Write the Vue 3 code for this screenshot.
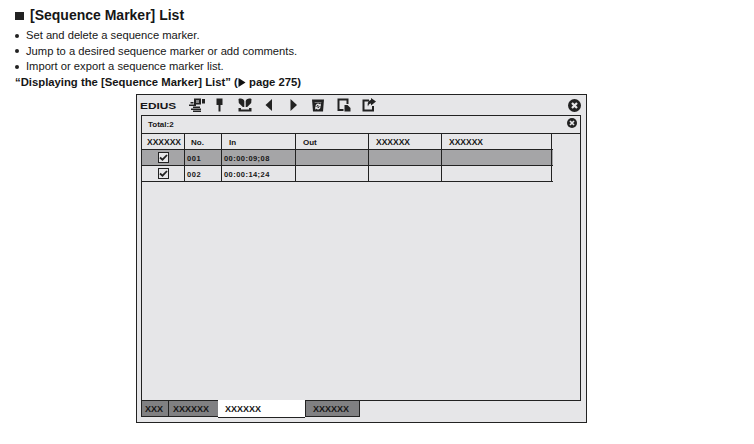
<script setup>
const items = ['Set and delete a sequence marker.', 'Jump to a desired sequence marker or add comments.', 'Import or export a sequence marker list.']
const cols = [
  { label: 'XXXXXX', cls: 'c0' },
  { label: 'No.', cls: 'c1' },
  { label: 'In', cls: 'c2' },
  { label: 'Out', cls: 'c3' },
  { label: 'XXXXXX', cls: 'c4' },
  { label: 'XXXXXX', cls: 'c5' }
]
const rows = [
  { no: '001', tc: '00:00:09;08', sel: true },
  { no: '002', tc: '00:00:14;24', sel: false }
]
</script>

<template>
  <div class="page">
    <header class="intro">
      <h1 class="title"><span class="square"></span>[Sequence Marker] List</h1>
      <ul class="bullets">
        <li v-for="t in items" :key="t"><span class="dot"></span>{{ t }}</li>
      </ul>
      <p class="ref">“Displaying the [Sequence Marker] List” (<svg class="arrow" width="8" height="9" viewBox="0 0 8 9"><path d="M0.5 0 L7.5 4.5 L0.5 9 Z" fill="#111"/></svg> page 275)</p>
    </header>

    <section class="window">
      <div class="toolbar">
        <span class="logo">EDIUS</span>
        <svg class="tool t1" width="16" height="15" viewBox="0 0 16 15">
          <path d="M5 0.500h7v6H5z M13 1h3v4.500h-3z M1.500 4h3v1.500h-3z M0 6.500h7V8H0z M4 8.500h7V10H4z M2 10.500h10V12H2z M4 12.500h8V14H4z" fill="#222"/>
          <path d="M7 2h3v3H7z" fill="#8a8a8a"/>
        </svg>
        <svg class="tool t2" width="7" height="14" viewBox="0 0 7 14">
          <path d="M0.500 0.500h6v6.500h-2v6.500h-2V7h-2z" fill="#222"/>
        </svg>
        <svg class="tool t3" width="14" height="14" viewBox="0 0 14 14">
          <path d="M0.500 1C3 0 6 1 6.300 3L6.300 9H4.800L0.800 5z M13.500 1C11 0 8 1 7.700 3L7.700 9h1.500l4-4z" fill="#222"/>
          <path d="M0.500 10h2.500v1.500h8V10h2.500v3.500H0.500z" fill="#222"/>
        </svg>
        <svg class="tool t4" width="8" height="12" viewBox="0 0 8 12">
          <path d="M7 0v12L0.500 6z" fill="#222"/>
        </svg>
        <svg class="tool t5" width="8" height="12" viewBox="0 0 8 12">
          <path d="M0.500 0v12l6.500-6z" fill="#222"/>
        </svg>
        <svg class="tool t6" width="12" height="13" viewBox="0 0 12 13">
          <path d="M0 0.500h12l-1 12H1z" fill="#222"/>
          <path d="M2.500 3h7l-.3 1H2.800z" fill="#777"/>
          <path d="M3.500 7a2.500 2.500 0 0 1 4.300-1.700l1-1v3.200H5.700l1-1A1.300 1.300 0 0 0 4.700 7z M8.500 8a2.500 2.500 0 0 1-4.300 1.700l-1 1V7.500h3.100l-1 1a1.300 1.300 0 0 0 2-.5z" fill="#e6e6e8"/>
        </svg>
        <svg class="tool t7" width="14" height="14" viewBox="0 0 14 14">
          <path d="M0.500 0.500h11V6H9.500V2.500h-7V11h4v2H0.500z" fill="#222"/>
          <path d="M7.500 7h3l3 3v3.500h-6z" fill="#222"/>
        </svg>
        <svg class="tool t8" width="14" height="14" viewBox="0 0 14 14">
          <path d="M0.500 1.500H7v2H2.500V11.500H10V8h2v5.500H0.500z" fill="#222"/>
          <path d="M9 0l5 3.500L9 7.500V5.500C7.500 5.500 6.500 6.500 6 8.500 5 5 6.500 2.500 9 2z" fill="#222"/>
        </svg>
        <svg class="close big" width="13" height="13" viewBox="0 0 13 13">
          <circle cx="6.500" cy="6.500" r="6.500" fill="#222"/>
          <path d="M4 4l5 5M9 4l-5 5" stroke="#e6e6e8" stroke-width="2.200"/>
        </svg>
      </div>

      <div class="panel">
        <div class="total">
          <span>Total:2</span>
          <svg class="close small" width="10" height="10" viewBox="0 0 10 10">
            <circle cx="5" cy="5" r="5" fill="#222"/>
            <path d="M3 3l4 4M7 3l-4 4" stroke="#e6e6e8" stroke-width="1.700"/>
          </svg>
        </div>
        <div class="grid">
          <div class="row head">
            <div v-for="c in cols" :key="c.cls + c.label" class="cell" :class="c.cls">{{ c.label }}</div>
          </div>
          <div v-for="r in rows" :key="r.no" class="row body" :class="{ sel: r.sel }">
            <div class="cell c0 chk">
              <span class="box">
                <svg width="9" height="7" viewBox="0 0 9 7"><path d="M1 3.500l2.500 2.200L8 1" fill="none" stroke="#222" stroke-width="1.800"/></svg>
              </span>
            </div>
            <div class="cell c1">{{ r.no }}</div>
            <div class="cell c2 tc">{{ r.tc }}</div>
            <div class="cell c3"></div>
            <div class="cell c4"></div>
            <div class="cell c5"></div>
          </div>
        </div>
      </div>

      <div class="tabs">
        <div class="tab off w0">XXX</div>
        <div class="tab off w1">XXXXXX</div>
        <div class="tab on">XXXXXX</div>
        <div class="tab off w3">XXXXXX</div>
      </div>
    </section>
  </div>
</template>

<style>
html, body { margin: 0; background: #fff; }
</style>

<style scoped>
.page {
  width: 754px;
  height: 444px;
  overflow: hidden;
  background: #fff;
  font-family: "Liberation Sans", Arial, sans-serif;
  color: #161616;
}
.intro { height: 94px; padding: 7px 0 0 15px; box-sizing: border-box; }
.title {
  margin: 0;
  display: flex;
  align-items: center;
  font-size: 14px;
  line-height: 17px;
  font-weight: 700;
}
.square { width: 9px; height: 8px; background: #222; margin-right: 6px; }
.bullets { list-style: none; margin: 4px 0 0; padding: 0; font-size: 11.200px; line-height: 15.500px; }
.bullets li { display: flex; align-items: center; }
.dot { width: 4px; height: 4px; border-radius: 50%; background: #222; margin-right: 7px; }
.ref { margin: 0; font-size: 11.300px; line-height: 15.500px; font-weight: 700; }
.arrow { vertical-align: -1px; }

.window {
  margin-left: 136px;
  width: 451px;
  height: 329px;
  box-sizing: border-box;
  border: 1px solid #222;
  background: #e6e6e8;
  display: flex;
  flex-direction: column;
  padding: 0 5px 5px 4px;
}
.toolbar { height: 20px; display: flex; align-items: center; flex: none; }
.logo {
  width: 49px;
  margin: 1px 0 0 -1px;
  font-size: 9.500px;
  font-weight: 700;
  transform: scaleX(1.250);
  transform-origin: left center;
}
.tool { flex: none; display: block; }
.t2 { margin-left: 11px; }
.t3 { margin-left: 15px; }
.t4 { margin-left: 13px; }
.t5 { margin-left: 17px; }
.t6 { margin-left: 14px; }
.t7 { margin-left: 13px; }
.t8 { margin-left: 11px; }
.close.big { margin-left: auto; margin-right: 0; }

.panel {
  flex: 1;
  border: 1px solid #222;
  display: flex;
  flex-direction: column;
  min-height: 0;
}
.total {
  height: 17px;
  flex: none;
  display: flex;
  align-items: center;
  justify-content: space-between;
  padding: 0 3px 0 6px;
  font-size: 8px;
  font-weight: 700;
  border-bottom: 1px solid #222;
}
.close.small { margin-bottom: 3px; }
.grid { display: flex; flex-direction: column; }
.row { display: flex; box-sizing: content-box; }
.row.body { border-bottom: 1px solid #222; height: 15px; width: 411px; }
.row.head { border-bottom: 1px solid #222; height: 15px; width: 411px; }
.row.sel { background: #a5a5a7; }
.cell {
  box-sizing: border-box;
  border-right: 1px solid #222;
  display: flex;
  align-items: center;
  font-size: 7.500px;
  font-weight: 700;
  padding-top: 1px;
  padding-left: 7px;
}
.head .cell { font-size: 8px; }
.c0 { width: 43px; }
.c1 { width: 37px; padding-left: 2px; letter-spacing: .6px; }
.c2 { width: 74px; }
.c3 { width: 73px; }
.c4 { width: 73px; }
.c5 { width: 110px; }
.head .c0 { padding-left: 5px; font-size: 8.500px; }
.head .c1 { padding-left: 6px; letter-spacing: 0; }
.head .c4, .head .c5 { font-size: 8.500px; }
.tc { padding-left: 2px; letter-spacing: .45px; }
.chk { justify-content: center; padding: 0; }
.box {
  width: 11px;
  height: 11px;
  box-sizing: border-box;
  border: 1px solid #222;
  background: #e6e6e8;
  display: flex;
  align-items: center;
  justify-content: center;
}

.tabs { display: flex; height: 17px; flex: none; margin-top: -1px; font-size: 9px; font-weight: 700; }
.tab { box-sizing: border-box; display: flex; align-items: center; height: 17px; padding: 1px 0 0 3px; }
.tab.off { background: #808082; border: 1px solid #222; }
.w0 { width: 28px; }
.w1 { width: 51px; margin-left: -1px; padding-left: 4px; }
.on { width: 87px; height: 18px; margin-left: -1px; padding-left: 7px; background: #fff; border-bottom: 1px solid #222; }
.w3 { width: 55px; padding-left: 7px; }
</style>
